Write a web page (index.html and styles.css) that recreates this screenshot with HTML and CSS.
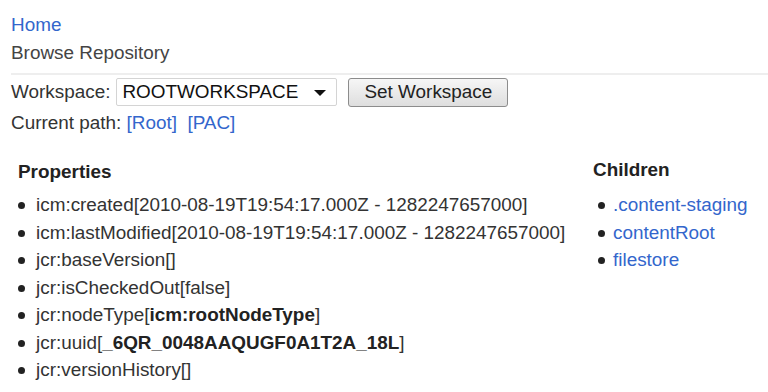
FILE: index.html
```html
<!DOCTYPE html>
<html>
<head>
<meta charset="utf-8">
<link rel="stylesheet" href="styles.css">
</head>
<body>
<div class="page">
  <div class="line"><a class="link" href="#">Home</a></div>
  <div class="line crumb">Browse Repository</div>
  <div class="rule"></div>
  <div class="ws-row">
    <span>Workspace:</span>
    <div class="select"><span>ROOTWORKSPACE</span><span class="caret"></span></div>
    <div class="button">Set Workspace</div>
  </div>
  <div class="line path">Current path: <a class="link" href="#">[Root]</a>&nbsp; <a class="link" href="#">[PAC]</a></div>
  <div class="cols">
    <div class="props">
      <div class="heading">Properties</div>
      <ul class="list">
        <li>icm:created[2010-08-19T19:54:17.000Z - 1282247657000]</li>
        <li>icm:lastModified[2010-08-19T19:54:17.000Z - 1282247657000]</li>
        <li>jcr:baseVersion[]</li>
        <li>jcr:isCheckedOut[false]</li>
        <li>jcr:nodeType[<b>icm:rootNodeType</b>]</li>
        <li>jcr:uuid[<b>_6QR_0048AAQUGF0A1T2A_18L</b>]</li>
        <li>jcr:versionHistory[]</li>
      </ul>
    </div>
    <div class="children">
      <div class="heading">Children</div>
      <ul class="list">
        <li><a class="link" href="#">.content-staging</a></li>
        <li><a class="link" href="#">contentRoot</a></li>
        <li><a class="link" href="#">filestore</a></li>
      </ul>
    </div>
  </div>
</div>
</body>
</html>
```

FILE: styles.css
```css
html, body {
  margin: 0;
  padding: 0;
  background: #ffffff;
}
body {
  font-family: "Liberation Sans", Arial, sans-serif;
  font-size: 18.9px;
  color: #333333;
}
.page {
  padding: 11px 0 0 11px;
}
.line {
  line-height: 28px;
  height: 28px;
}
.link {
  color: #3366cc;
  text-decoration: none;
}
.crumb {
  color: #444444;
}
.rule {
  height: 2px;
  background: #eeeeee;
  margin: 6px 0 2px 0;
}
.ws-row {
  display: flex;
  align-items: center;
  height: 30px;
}
.select {
  margin-left: 6px;
  width: 221px;
  height: 28px;
  box-sizing: border-box;
  border: 1px solid #d4d4d4;
  border-radius: 2px;
  background: #ffffff;
  display: flex;
  align-items: center;
  justify-content: space-between;
  padding: 0 10px 0 5px;
  color: #111111;
}
.caret {
  width: 0;
  height: 0;
  border-left: 6px solid transparent;
  border-right: 6px solid transparent;
  border-top: 6px solid #111111;
  margin-top: 2px;
}
.button {
  margin-left: 11px;
  width: 160px;
  height: 29px;
  box-sizing: border-box;
  border: 1px solid #8c8c8c;
  border-radius: 3px;
  background: linear-gradient(#f6f6f6, #dedede);
  display: flex;
  align-items: center;
  justify-content: center;
  color: #222222;
}
.path {
  margin-top: 2px;
}
.cols {
  display: flex;
  margin-top: 21px;
}
.props {
  width: 575px;
  padding-left: 7px;
}
.heading {
  font-weight: bold;
  line-height: 28px;
  color: #222222;
}
.list {
  list-style: none;
  margin: 5px 0 0 0;
  padding: 0;
}
.list li {
  position: relative;
  padding-left: 18px;
  line-height: 27.5px;
  white-space: nowrap;
}
.list li::before {
  content: "";
  position: absolute;
  left: 0;
  top: 11px;
  width: 7px;
  height: 7px;
  border-radius: 50%;
  background: #222222;
}
.list b {
  color: #222222;
}
.children .heading {
  margin-top: -2px;
}
.children .list {
  margin-top: 7px;
}
.children .list li::before {
  left: 5px;
}
.children .list li {
  padding-left: 20px;
}
```
